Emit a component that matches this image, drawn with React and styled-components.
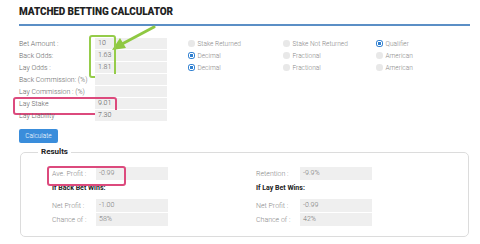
import styled, { createGlobalStyle } from "styled-components";

const GlobalStyle = createGlobalStyle`
  body {
    margin: 0;
    background: #fff;
    font-family: Roboto, "Liberation Sans", sans-serif;
  }
  * { box-sizing: border-box; }
`;

const formRows = [
  { label: "Bet Amount :", value: "10" },
  { label: "Back Odds:", value: "1.63" },
  { label: "Lay Odds :", value: "1.81" },
  { label: "Back Commission: (%)", value: "" },
  { label: "Lay Commission : (%)", value: "" },
  { label: "Lay Stake", value: "9.01", mark: true },
  { label: "Lay Liability", value: "7.30" },
];

const options = [
  [
    { text: "Stake Returned" },
    { text: "Stake Not Returned" },
    { text: "Qualifier", on: true },
  ],
  [{ text: "Decimal", on: true }, { text: "Fractional" }, { text: "American" }],
  [{ text: "Decimal", on: true }, { text: "Fractional" }, { text: "American" }],
];

function Arrow() {
  return (
    <ArrowSvg width="50" height="30" viewBox="0 0 50 30">
      <path d="M46 2 L14 19" stroke="#8fc842" strokeWidth="3" strokeLinecap="round" />
      <polygon points="4,25 12,13 18,23" fill="#8fc842" />
    </ArrowSvg>
  );
}

function App() {
  return (
    <>
      <GlobalStyle />
      <S.Page>
        <S.Header>
          <S.Title>MATCHED BETTING CALCULATOR</S.Title>
        </S.Header>

        <S.Form>
          <S.Fields>
            <S.TopGroup>
              {formRows.slice(0, 3).map((r) => (
                <S.Row key={r.label}>
                  <S.Label>{r.label}</S.Label>
                  <S.Input>{r.value}</S.Input>
                </S.Row>
              ))}
              <Arrow />
            </S.TopGroup>
            {formRows.slice(3).map((r) => (
              <S.Row key={r.label} $mark={r.mark}>
                <S.Label>{r.label}</S.Label>
                <S.Input>{r.value}</S.Input>
              </S.Row>
            ))}
          </S.Fields>

          <S.Options>
            {options.map((row, i) =>
              row.map((o, j) => (
                <S.Option key={`${i}-${j}`}>
                  <S.Radio $on={o.on} />
                  {o.text}
                </S.Option>
              ))
            )}
          </S.Options>
        </S.Form>

        <S.Button>Calculate</S.Button>

        <S.Results>
          <S.Legend>Results</S.Legend>
          <S.ResultGrid>
            <S.Column>
              <S.ResultRow $mark>
                <S.ResultLabel>Ave. Profit :</S.ResultLabel>
                <S.ResultInput>-0.99</S.ResultInput>
              </S.ResultRow>
              <S.SubHead>If Back Bet Wins:</S.SubHead>
              <S.ResultRow>
                <S.ResultLabel>Net Profit :</S.ResultLabel>
                <S.ResultInput>-1.00</S.ResultInput>
              </S.ResultRow>
              <S.ResultRow>
                <S.ResultLabel>Chance of :</S.ResultLabel>
                <S.ResultInput>58%</S.ResultInput>
              </S.ResultRow>
            </S.Column>
            <S.Column>
              <S.ResultRow>
                <S.ResultLabel>Retention :</S.ResultLabel>
                <S.ResultInput>-9.9%</S.ResultInput>
              </S.ResultRow>
              <S.SubHead>If Lay Bet Wins:</S.SubHead>
              <S.ResultRow>
                <S.ResultLabel>Net Profit :</S.ResultLabel>
                <S.ResultInput>-0.99</S.ResultInput>
              </S.ResultRow>
              <S.ResultRow>
                <S.ResultLabel>Chance of :</S.ResultLabel>
                <S.ResultInput>42%</S.ResultInput>
              </S.ResultRow>
            </S.Column>
          </S.ResultGrid>
        </S.Results>
      </S.Page>
    </>
  );
}

export default App;

const Page = styled.div`
  width: 480px;
  padding: 0 10px 0 19px;
`;

const Header = styled.div`
  height: 26px;
  padding-top: 6px;
  border-bottom: 2px solid #5b8fc6;
`;

const Title = styled.h1`
  margin: 0;
  font-size: 10px;
  line-height: 12px;
  font-weight: 900;
  color: #222;
  letter-spacing: -0.1px;
`;

const Form = styled.div`
  display: flex;
  margin-top: 12px;
`;

const Fields = styled.div`
  display: flex;
  flex-direction: column;
  gap: 1px;
  width: 148px;
`;

const TopGroup = styled.div`
  position: relative;
  display: flex;
  flex-direction: column;
  gap: 1px;
  &::after {
    content: "";
    position: absolute;
    left: 70px;
    top: -3px;
    width: 23px;
    height: 39px;
    border: 2px solid #95cc4a;
    border-radius: 3px;
  }
`;

const ArrowSvg = styled.svg`
  position: absolute;
  left: 89px;
  top: -13px;
`;

const Row = styled.div`
  position: relative;
  display: flex;
  align-items: center;
  height: 11px;
  ${({ $mark }) =>
    $mark &&
    `
    &::after {
      content: "";
      position: absolute;
      left: -6px;
      top: -1px;
      width: 100px;
      height: 14px;
      border: 2px solid #dc4a7d;
      border-radius: 3px;
    }
  `}
`;

const Label = styled.span`
  width: 76px;
  font-size: 7px;
  font-weight: 300;
  color: #666;
  white-space: nowrap;
`;

const Input = styled.div`
  width: 72px;
  height: 11px;
  padding-left: 3px;
  background: #efefef;
  font-size: 7px;
  line-height: 11px;
  font-weight: 300;
  color: #555;
`;

const Options = styled.div`
  display: grid;
  grid-template-columns: 95px 93px auto;
  grid-auto-rows: 11px;
  row-gap: 1px;
  margin-left: 21px;
  align-content: start;
`;

const Option = styled.label`
  display: flex;
  align-items: center;
  gap: 3px;
  font-size: 6.5px;
  font-weight: 300;
  color: #888;
  white-space: nowrap;
`;

const Radio = styled.span`
  width: 6.5px;
  height: 6.5px;
  border-radius: 50%;
  ${({ $on }) =>
    $on
      ? `background: radial-gradient(circle, #2f7fd0 32%, #fff 40%, #fff 52%, #2f7fd0 60%);`
      : `background: #e8e8e8;`}
`;

const Button = styled.button`
  display: block;
  margin-top: 8px;
  width: 39px;
  height: 14px;
  padding: 0;
  border: none;
  border-radius: 2px;
  background: #3a8ddb;
  color: #fff;
  font-family: inherit;
  font-size: 6.5px;
  font-weight: 300;
`;

const Results = styled.fieldset`
  margin: 4px 0 0 1px;
  width: 449px;
  padding: 10px 0 10px 31px;
  border: 1px solid #dcdcdc;
  border-radius: 5px;
`;

const Legend = styled.legend`
  margin-left: -14px;
  padding: 0 3px;
  font-size: 8px;
  line-height: 10px;
  font-weight: 700;
  color: #222;
`;

const ResultGrid = styled.div`
  display: grid;
  grid-template-columns: 204px 204px;
`;

const Column = styled.div`
  display: flex;
  flex-direction: column;
  gap: 1px;
`;

const ResultRow = styled(Row)`
  height: 13px;
  &::after {
    left: -5px;
    top: -1px;
    width: 75px;
    height: 16px;
  }
`;

const ResultLabel = styled(Label)`
  width: 44px;
  color: #888;
`;

const ResultInput = styled(Input)`
  height: 13px;
  line-height: 13px;
  color: #777;
`;

const SubHead = styled.div`
  height: 11px;
  margin: 2px 0 4px;
  font-size: 7px;
  line-height: 11px;
  font-weight: 700;
  color: #222;
`;

const S = {
  Page,
  Header,
  Title,
  Form,
  Fields,
  TopGroup,
  Row,
  Label,
  Input,
  Options,
  Option,
  Radio,
  Button,
  Results,
  Legend,
  ResultGrid,
  Column,
  ResultRow,
  ResultLabel,
  ResultInput,
  SubHead,
};
